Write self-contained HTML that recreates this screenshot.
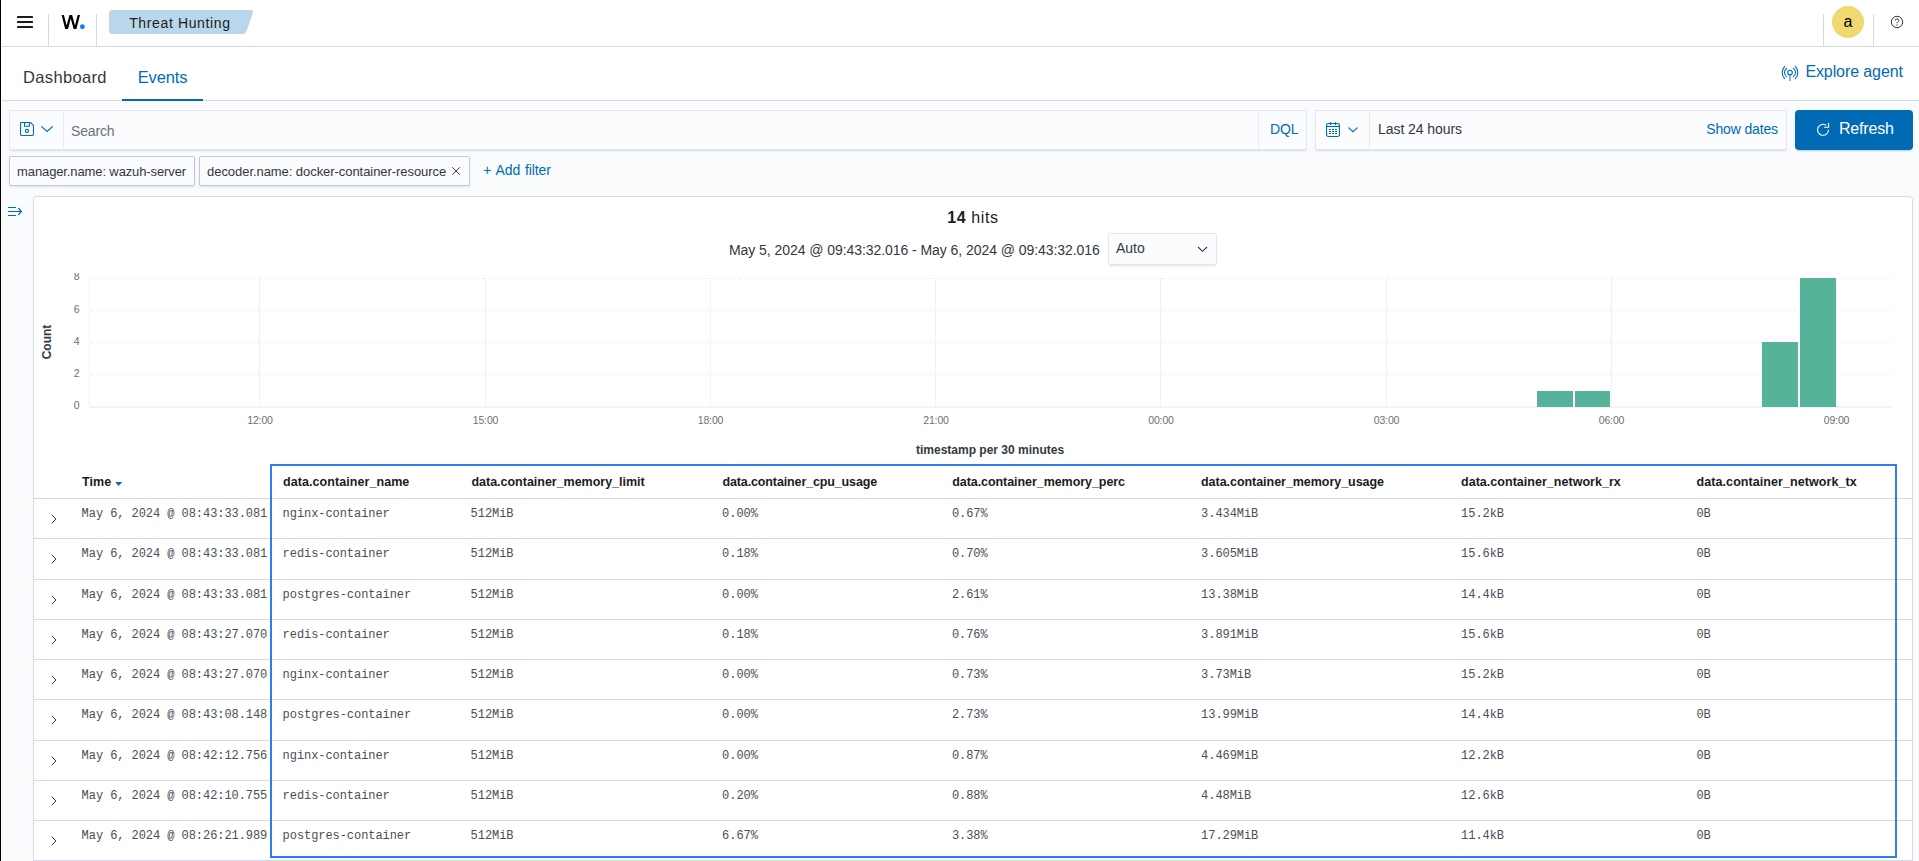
<!DOCTYPE html>
<html>
<head>
<meta charset="utf-8">
<title>Threat Hunting</title>
<style>
*{box-sizing:border-box;margin:0;padding:0}
html,body{width:1919px;height:861px;overflow:hidden}
body{position:relative;background:#fafbfd;font-family:"Liberation Sans",sans-serif;color:#343741;font-size:14px}
.abs{position:absolute}
.t{position:absolute;white-space:nowrap;line-height:1}
#leftbar{left:0;top:0;width:2px;height:861px;background:linear-gradient(to right,#000 0,#000 1px,#fff 1px,#fff 2px)}
#header{left:1px;top:0;width:1918px;height:47px;background:#fff;border-bottom:1px solid #d3dae6}
.vsep{position:absolute;width:1px;background:#d3dae6;top:14px;height:32px}
#tabs{left:1px;top:47px;width:1918px;height:54px;background:#fff;border-bottom:1px solid #d3dae6}
.blue{color:#006bb4}
.mono{font-family:"Liberation Mono",monospace;font-size:12px;letter-spacing:-0.06px;color:#4a4e59}
.th{font-weight:bold;font-size:12.5px;letter-spacing:0.07px;color:#1a1c21}
.rowline{position:absolute;left:34px;width:1878px;height:1px;background:#d3dae6}
.field{position:absolute;background:#fbfcfd;border:1px solid #e3e8f0;box-shadow:0 1px 1px -1px rgba(152,162,179,.3),0 2px 2px -1px rgba(152,162,179,.3)}
.pill{position:absolute;top:156px;height:30px;background:#fbfcfd;border:1px solid #c3c9d6;border-radius:2px;box-shadow:0 1px 2px rgba(152,162,179,.25)}
.pilltxt{font-size:13px;letter-spacing:-0.06px;color:#343741;top:8px}
#panel{left:33px;top:196px;width:1880px;height:680px;background:#fff;border:1px solid #d3dae6;border-radius:3.5px}
#bluebox{left:270px;top:464px;width:1627px;height:394px;border:2px solid #2e7df0}
.axl{font-size:10.5px;letter-spacing:-0.12px;color:#69707d}
.hgrid{position:absolute;left:89px;width:1802px;height:1px;background:repeating-linear-gradient(to right,#ebeef3 0,#ebeef3 4px,transparent 4px,transparent 8px)}
.vgrid{position:absolute;top:278px;width:1px;height:129px;background:#f0f2f5}
.bar{position:absolute;background:#54b399}

</style>
</head>
<body>
<div id="header" class="abs"></div>
<div id="tabs" class="abs"></div>
<div class="vsep" style="left:48px"></div>
<div class="vsep" style="left:96px"></div>
<div class="vsep" style="left:1823px"></div>
<div class="vsep" style="left:1873px"></div>
<div class="abs" style="left:1832px;top:6px;width:32px;height:32px;border-radius:50%;background:#f1d86f"></div>
<div class="t" style="left:1843.5px;top:14px;font-size:16px;color:#000">a</div>
<svg class="abs" style="left:109px;top:10px" width="146" height="24" viewBox="109 10 146 24"><path d="M112.5 10H250.5Q254 10 252.8 13.2L246.6 31Q245.5 34 242 34H112.5Q109 34 109 30.5V13.5Q109 10 112.5 10Z" fill="#b9d6ea"/></svg>
<div class="t" style="left:129.2px;top:16px;font-size:14px;letter-spacing:0.63px;color:#1a1c21">Threat Hunting</div>
<!-- tabs -->
<div class="t" style="left:23.1px;top:69px;font-size:16.5px;letter-spacing:0.32px;color:#343741">Dashboard</div>
<div class="t blue" style="left:137.7px;top:69px;font-size:16.5px;letter-spacing:-0.15px">Events</div>
<div class="abs" style="left:122px;top:99px;width:81px;height:2px;background:#006bb4"></div>
<div class="t blue" style="left:1805.4px;top:64px;font-size:16px;letter-spacing:-0.1px">Explore agent</div>
<!-- search row -->
<div class="field" style="left:9px;top:110px;width:1298px;height:40px"></div>
<div class="abs" style="left:63px;top:111px;width:1px;height:38px;background:#e9edf3"></div>
<div class="abs" style="left:1258px;top:111px;width:1px;height:38px;background:#e9edf3"></div>
<div class="t" style="left:71px;top:124px;font-size:14px;letter-spacing:-0.15px;color:#6b717c">Search</div>
<div class="t blue" style="left:1270px;top:122px;font-size:14px;letter-spacing:-0.1px">DQL</div>
<div class="field" style="left:1315px;top:110px;width:472px;height:40px"></div>
<div class="abs" style="left:1369px;top:111px;width:1px;height:38px;background:#e9edf3"></div>
<div class="t" style="left:1378px;top:122px;font-size:14px;letter-spacing:-0.065px;color:#343741">Last 24 hours</div>
<div class="t blue" style="left:1706.3px;top:122px;font-size:14px;letter-spacing:-0.15px">Show dates</div>
<div class="abs" style="left:1795px;top:110px;width:118px;height:40px;background:#006bb4;border-radius:4px;box-shadow:0 2px 2px -1px rgba(0,107,180,.3)"></div>
<div class="t" style="left:1839px;top:121px;font-size:16px;letter-spacing:-0.2px;color:#fff">Refresh</div>
<!-- filter pills -->
<div class="pill" style="left:9px;width:186px"><div class="t pilltxt" style="left:7.1px;letter-spacing:-0.12px">manager.name: wazuh-server</div></div>
<div class="pill" style="left:199px;width:271px"><div class="t pilltxt" style="left:7.1px">decoder.name: docker-container-resource</div></div>
<div class="t blue" style="left:483.3px;top:163px;font-size:14px;word-spacing:1px;letter-spacing:-0.08px">+ Add filter</div>
<div id="panel" class="abs"></div>

<div class="t" style="left:947.2px;top:210px;font-size:16px;color:#1a1c21;letter-spacing:0.6px"><b>14</b> hits</div>
<div class="t" style="left:729px;top:243px;font-size:14px;letter-spacing:-0.06px;color:#343741">May 5, 2024 @ 09:43:32.016 - May 6, 2024 @ 09:43:32.016</div>
<div class="field" style="left:1108px;top:233px;width:109px;height:32px;border-radius:2px"></div>
<div class="t" style="left:1116px;top:241px;font-size:14px;color:#343741">Auto</div>
<div class="hgrid" style="top:278px"></div>
<div class="hgrid" style="top:310px"></div>
<div class="hgrid" style="top:342px"></div>
<div class="hgrid" style="top:374px"></div>
<div class="abs" style="left:89px;top:406px;width:1802px;height:2px;background:#f1f3f7"></div>
<div class="abs" style="left:89px;top:278px;width:1px;height:129px;background:#f1f3f7"></div>
<div class="vgrid" style="left:259px"></div>
<div class="vgrid" style="left:485px"></div>
<div class="vgrid" style="left:710px"></div>
<div class="vgrid" style="left:935px"></div>
<div class="vgrid" style="left:1160px"></div>
<div class="vgrid" style="left:1386px"></div>
<div class="vgrid" style="left:1611px"></div>
<div class="vgrid" style="left:1836px"></div>
<div class="abs" style="left:60px;top:273px;width:24px;height:12px;overflow:hidden"><div class="t axl" style="right:4.6px;top:-2px">8</div></div>
<div class="t axl" style="right:1839.6px;top:304px">6</div>
<div class="t axl" style="right:1839.6px;top:336px">4</div>
<div class="t axl" style="right:1839.6px;top:368px">2</div>
<div class="t axl" style="right:1839.6px;top:400px">0</div>
<div class="abs" style="left:47px;top:342px;width:0;height:0"><div class="t" style="left:0;top:0;transform:translate(-50%,-50%) rotate(-90deg);font-size:12px;font-weight:bold;color:#343741">Count</div></div>
<div class="t axl" style="left:260px;top:415px;transform:translateX(-50%)">12:00</div>
<div class="t axl" style="left:485.5px;top:415px;transform:translateX(-50%)">15:00</div>
<div class="t axl" style="left:710.5px;top:415px;transform:translateX(-50%)">18:00</div>
<div class="t axl" style="left:936px;top:415px;transform:translateX(-50%)">21:00</div>
<div class="t axl" style="left:1161px;top:415px;transform:translateX(-50%)">00:00</div>
<div class="t axl" style="left:1386.5px;top:415px;transform:translateX(-50%)">03:00</div>
<div class="t axl" style="left:1611.5px;top:415px;transform:translateX(-50%)">06:00</div>
<div class="t axl" style="left:1836.5px;top:415px;transform:translateX(-50%)">09:00</div>
<div class="bar" style="left:1537px;top:391px;width:36px;height:16px"></div>
<div class="bar" style="left:1575px;top:391px;width:35px;height:16px"></div>
<div class="bar" style="left:1762px;top:342.4px;width:36px;height:64.6px"></div>
<div class="bar" style="left:1800px;top:278px;width:35.5px;height:129px"></div>
<div class="t" style="left:916px;top:444px;font-size:12px;font-weight:bold;color:#343741">timestamp per 30 minutes</div>

<div class="t th" style="left:82.0px;top:476px;letter-spacing:0.07px">Time</div>
<div class="t th" style="left:283.0px;top:476px;letter-spacing:0.07px">data.container_name</div>
<div class="t th" style="left:471.5px;top:476px;letter-spacing:-0.02px">data.container_memory_limit</div>
<div class="t th" style="left:722.5px;top:476px;letter-spacing:-0.13px">data.container_cpu_usage</div>
<div class="t th" style="left:952.2px;top:476px;letter-spacing:-0.06px">data.container_memory_perc</div>
<div class="t th" style="left:1201.0px;top:476px;letter-spacing:-0.04px">data.container_memory_usage</div>
<div class="t th" style="left:1461.0px;top:476px;letter-spacing:0.03px">data.container_network_rx</div>
<div class="t th" style="left:1696.6px;top:476px;letter-spacing:0.07px">data.container_network_tx</div>
<div class="rowline" style="top:498px"></div>
<div class="rowline" style="top:538px"></div>
<div class="rowline" style="top:579px"></div>
<div class="rowline" style="top:619px"></div>
<div class="rowline" style="top:659px"></div>
<div class="rowline" style="top:699px"></div>
<div class="rowline" style="top:740px"></div>
<div class="rowline" style="top:780px"></div>
<div class="rowline" style="top:820px"></div>
<div class="rowline" style="top:860px"></div>
<div class="t mono" style="left:81.6px;top:508px">May 6, 2024 @ 08:43:33.081</div>
<div class="t mono" style="left:282.6px;top:508px">nginx-container</div>
<div class="t mono" style="left:470.6px;top:508px">512MiB</div>
<div class="t mono" style="left:722.1px;top:508px">0.00%</div>
<div class="t mono" style="left:951.9px;top:508px">0.67%</div>
<div class="t mono" style="left:1201.1px;top:508px">3.434MiB</div>
<div class="t mono" style="left:1461.1px;top:508px">15.2kB</div>
<div class="t mono" style="left:1696.4px;top:508px">0B</div>
<div class="t mono" style="left:81.6px;top:548px">May 6, 2024 @ 08:43:33.081</div>
<div class="t mono" style="left:282.6px;top:548px">redis-container</div>
<div class="t mono" style="left:470.6px;top:548px">512MiB</div>
<div class="t mono" style="left:722.1px;top:548px">0.18%</div>
<div class="t mono" style="left:951.9px;top:548px">0.70%</div>
<div class="t mono" style="left:1201.1px;top:548px">3.605MiB</div>
<div class="t mono" style="left:1461.1px;top:548px">15.6kB</div>
<div class="t mono" style="left:1696.4px;top:548px">0B</div>
<div class="t mono" style="left:81.6px;top:589px">May 6, 2024 @ 08:43:33.081</div>
<div class="t mono" style="left:282.6px;top:589px">postgres-container</div>
<div class="t mono" style="left:470.6px;top:589px">512MiB</div>
<div class="t mono" style="left:722.1px;top:589px">0.00%</div>
<div class="t mono" style="left:951.9px;top:589px">2.61%</div>
<div class="t mono" style="left:1201.1px;top:589px">13.38MiB</div>
<div class="t mono" style="left:1461.1px;top:589px">14.4kB</div>
<div class="t mono" style="left:1696.4px;top:589px">0B</div>
<div class="t mono" style="left:81.6px;top:629px">May 6, 2024 @ 08:43:27.070</div>
<div class="t mono" style="left:282.6px;top:629px">redis-container</div>
<div class="t mono" style="left:470.6px;top:629px">512MiB</div>
<div class="t mono" style="left:722.1px;top:629px">0.18%</div>
<div class="t mono" style="left:951.9px;top:629px">0.76%</div>
<div class="t mono" style="left:1201.1px;top:629px">3.891MiB</div>
<div class="t mono" style="left:1461.1px;top:629px">15.6kB</div>
<div class="t mono" style="left:1696.4px;top:629px">0B</div>
<div class="t mono" style="left:81.6px;top:669px">May 6, 2024 @ 08:43:27.070</div>
<div class="t mono" style="left:282.6px;top:669px">nginx-container</div>
<div class="t mono" style="left:470.6px;top:669px">512MiB</div>
<div class="t mono" style="left:722.1px;top:669px">0.00%</div>
<div class="t mono" style="left:951.9px;top:669px">0.73%</div>
<div class="t mono" style="left:1201.1px;top:669px">3.73MiB</div>
<div class="t mono" style="left:1461.1px;top:669px">15.2kB</div>
<div class="t mono" style="left:1696.4px;top:669px">0B</div>
<div class="t mono" style="left:81.6px;top:709px">May 6, 2024 @ 08:43:08.148</div>
<div class="t mono" style="left:282.6px;top:709px">postgres-container</div>
<div class="t mono" style="left:470.6px;top:709px">512MiB</div>
<div class="t mono" style="left:722.1px;top:709px">0.00%</div>
<div class="t mono" style="left:951.9px;top:709px">2.73%</div>
<div class="t mono" style="left:1201.1px;top:709px">13.99MiB</div>
<div class="t mono" style="left:1461.1px;top:709px">14.4kB</div>
<div class="t mono" style="left:1696.4px;top:709px">0B</div>
<div class="t mono" style="left:81.6px;top:750px">May 6, 2024 @ 08:42:12.756</div>
<div class="t mono" style="left:282.6px;top:750px">nginx-container</div>
<div class="t mono" style="left:470.6px;top:750px">512MiB</div>
<div class="t mono" style="left:722.1px;top:750px">0.00%</div>
<div class="t mono" style="left:951.9px;top:750px">0.87%</div>
<div class="t mono" style="left:1201.1px;top:750px">4.469MiB</div>
<div class="t mono" style="left:1461.1px;top:750px">12.2kB</div>
<div class="t mono" style="left:1696.4px;top:750px">0B</div>
<div class="t mono" style="left:81.6px;top:790px">May 6, 2024 @ 08:42:10.755</div>
<div class="t mono" style="left:282.6px;top:790px">redis-container</div>
<div class="t mono" style="left:470.6px;top:790px">512MiB</div>
<div class="t mono" style="left:722.1px;top:790px">0.20%</div>
<div class="t mono" style="left:951.9px;top:790px">0.88%</div>
<div class="t mono" style="left:1201.1px;top:790px">4.48MiB</div>
<div class="t mono" style="left:1461.1px;top:790px">12.6kB</div>
<div class="t mono" style="left:1696.4px;top:790px">0B</div>
<div class="t mono" style="left:81.6px;top:830px">May 6, 2024 @ 08:26:21.989</div>
<div class="t mono" style="left:282.6px;top:830px">postgres-container</div>
<div class="t mono" style="left:470.6px;top:830px">512MiB</div>
<div class="t mono" style="left:722.1px;top:830px">6.67%</div>
<div class="t mono" style="left:951.9px;top:830px">3.38%</div>
<div class="t mono" style="left:1201.1px;top:830px">17.29MiB</div>
<div class="t mono" style="left:1461.1px;top:830px">11.4kB</div>
<div class="t mono" style="left:1696.4px;top:830px">0B</div>
<div class="abs" id="bluebox"></div>
<svg class="abs" style="left:0;top:0;pointer-events:none" width="1919" height="861" viewBox="0 0 1919 861">
<!-- hamburger -->
<g fill="#1a1c21"><rect x="17" y="16" width="16" height="2" rx="0.6"/><rect x="17" y="21" width="16" height="2" rx="0.6"/><rect x="17" y="26" width="16" height="2" rx="0.6"/></g>
<!-- W logo -->
<defs><clipPath id="wc"><rect x="60" y="14.9" width="22" height="14.2"/></clipPath></defs>
<path clip-path="url(#wc)" d="M62.35 13.4L66.6 29.9L70.8 14.4L75 29.9L79.25 13.4" fill="none" stroke="#000" stroke-width="2.25" stroke-linejoin="miter" stroke-miterlimit="10"/>
<circle cx="82.4" cy="26.75" r="2.4" fill="#0b78ff"/>
<!-- help -->
<g fill="none" stroke="#343741" stroke-width="1"><circle cx="1897" cy="22" r="5.7"/><path d="M1895.2 20.6Q1895.2 18.9 1897 18.9Q1898.8 18.9 1898.8 20.4Q1898.8 21.3 1897.7 21.9Q1897 22.3 1897 23.2"/></g><circle cx="1897" cy="24.9" r="0.7" fill="#343741"/>
<!-- explore agent icon -->
<g fill="none" stroke="#006bb4" stroke-width="1.1" stroke-linecap="round"><circle cx="1790" cy="72.5" r="2.3"/><path d="M1790 75.2V80.4" stroke-width="1.3" stroke-opacity="0.75"/><path d="M1786.7 68.3A5 5 0 0 0 1786.7 76.6M1793.3 68.3A5 5 0 0 1 1793.3 76.6"/><path d="M1784.75 66.3A8.7 8.7 0 0 0 1784.75 78.7M1795.25 66.3A8.7 8.7 0 0 1 1795.25 78.7"/></g>
<!-- save icon + chevron -->
<g fill="none" stroke="#006bb4" stroke-width="1.1"><path d="M21.3 122.55H30.6L33.45 125.3V134.6Q33.45 135.45 32.6 135.45H21.4Q20.55 135.45 20.55 134.6V123.3Q20.55 122.55 21.3 122.55Z" stroke-linejoin="round"/><path d="M24.6 122.6V126.2H29.3V122.6" stroke-linejoin="round"/><circle cx="27" cy="131" r="1.6"/><path d="M41.6 126.6L47.05 131.5L52.5 126.6" stroke-width="1.2" stroke-linecap="round"/></g>
<!-- calendar icon + chevron -->
<g fill="none" stroke="#006bb4" stroke-width="1.1"><rect x="1326.55" y="123.55" width="12.9" height="12.9" rx="1.6"/><path d="M1326.6 126.45H1339.4"/><path d="M1330.45 122.5V124.4M1335.5 122.5V124.4" stroke-width="1.2" stroke-linecap="round"/><path d="M1329 129.5H1331M1332 129.5H1334M1335 129.5H1337M1329 131.5H1331M1332 131.5H1334M1335 131.5H1337M1329 133.5H1331M1332 133.5H1334M1335 133.5H1337" stroke-width="1"/><path d="M1348.7 127.9L1353 131.7L1357.3 127.9" stroke-linecap="round"/></g>
<!-- refresh icon -->
<g fill="none" stroke="#fff" stroke-width="1.1"><path d="M1826.3 125.35A5.5 5.5 0 1 0 1828.55 129.8"/><path d="M1828.6 123.1V127.2H1824.1"/></g>
<!-- pill close -->
<path d="M452.3 167.3L459.8 174.8M459.8 167.3L452.3 174.8" stroke="#343741" stroke-width="1" fill="none"/>
<!-- collapse -->
<g fill="none" stroke="#006bb4" stroke-width="1.2" stroke-linecap="round"><path d="M8.5 207.5H15.6M8.5 211.5H21M8.5 215.5H15.6"/><path d="M18.7 208.5L21.4 211.5L18.7 214.5"/></g>
<!-- select arrow -->
<path d="M1198 247L1202.5 251.3L1207 247" fill="none" stroke="#343741" stroke-width="1.1"/>
<!-- sort arrow -->
<path d="M115.2 482H122.2L118.7 486Z" fill="#006bb4"/>
<path d="M51.9 514.8L55.9 519.0L51.9 523.2" fill="none" stroke="#343741" stroke-width="1"/>
<path d="M51.9 554.8L55.9 559.0L51.9 563.2" fill="none" stroke="#343741" stroke-width="1"/>
<path d="M51.9 595.8L55.9 600.0L51.9 604.2" fill="none" stroke="#343741" stroke-width="1"/>
<path d="M51.9 635.8L55.9 640.0L51.9 644.2" fill="none" stroke="#343741" stroke-width="1"/>
<path d="M51.9 675.8L55.9 680.0L51.9 684.2" fill="none" stroke="#343741" stroke-width="1"/>
<path d="M51.9 715.8L55.9 720.0L51.9 724.2" fill="none" stroke="#343741" stroke-width="1"/>
<path d="M51.9 756.8L55.9 761.0L51.9 765.2" fill="none" stroke="#343741" stroke-width="1"/>
<path d="M51.9 796.8L55.9 801.0L51.9 805.2" fill="none" stroke="#343741" stroke-width="1"/>
<path d="M51.9 836.8L55.9 841.0L51.9 845.2" fill="none" stroke="#343741" stroke-width="1"/>
</svg>

<div id="leftbar" class="abs"></div>
</body>
</html>
